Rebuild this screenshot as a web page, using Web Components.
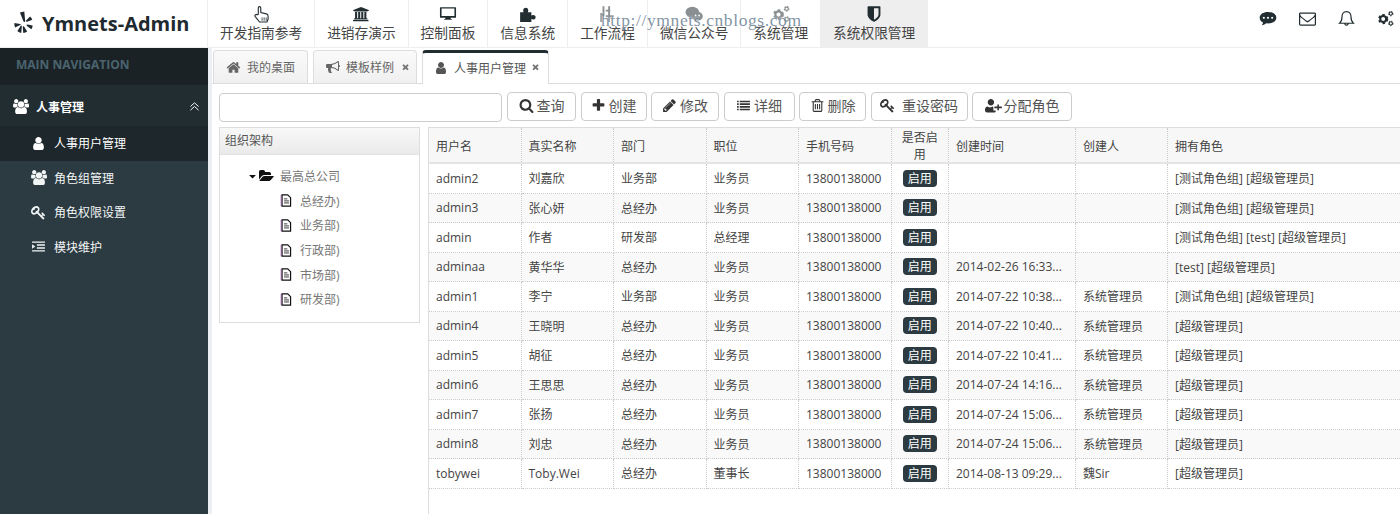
<!DOCTYPE html>
<html lang="zh">
<head>
<meta charset="utf-8">
<title>Ymnets-Admin</title>
<style>
  html, body { margin: 0; height: 100%; overflow: hidden; background: #fff; }
  body { font-family: "Open Sans", "Noto Sans CJK SC", sans-serif; font-size: 12px; color: #444; }
</style>
</head>
<body>
<ym-app></ym-app>
<script>
// Icon shapes, font-awesome style on a 1792 grid unless the entry gives its own box
const FA = 1792;
const ICONS = {
  search: 'M1216 832q0-185-131.5-316.5t-316.5-131.5-316.5 131.5-131.5 316.5 131.5 316.5 316.5 131.5 316.5-131.5 131.5-316.5zm512 832q0 52-38 90t-90 38q-54 0-90-38l-343-342q-179 124-399 124-143 0-273.5-55.5t-225-150-150-225-55.5-273.5 55.5-273.5 150-225 225-150 273.5-55.5 273.5 55.5 225 150 150 225 55.5 273.5q0 220-124 399l343 343q37 37 37 90z',
  user: 'M1536 1399q0 109-62.5 187t-150.5 78h-854q-88 0-150.5-78t-62.5-187q0-85 8.5-160.5t31.5-152 58.5-131 94-89 134.5-34.5q131 128 313 128t313-128q76 0 134.5 34.5t94 89 58.5 131 31.5 152 8.5 160.5zm-256-887q0 159-112.5 271.5t-271.5 112.5-271.5-112.5-112.5-271.5 112.5-271.5 271.5-112.5 271.5 112.5 112.5 271.5z',
  plus: 'M1600 736v192q0 40-28 68t-68 28h-416v416q0 40-28 68t-68 28h-192q-40 0-68-28t-28-68v-416h-416q-40 0-68-28t-28-68v-192q0-40 28-68t68-28h416v-416q0-40 28-68t68-28h192q40 0 68 28t28 68v416h416q40 0 68 28t28 68z',
  home: 'M1472 992v480q0 26-19 45t-45 19h-384v-384h-256v384h-384q-26 0-45-19t-19-45v-480q0-1 .5-3t.5-3l575-474 575 474q1 2 1 6zm223-69l-62 74q-8 9-21 11h-3q-13 0-21-7l-692-577-692 577q-12 8-24 7-13-2-21-11l-62-74q-8-10-7-23.5t11-21.5l719-599q32-26 76-26t76 26l244 204v-195q0-14 9-23t23-9h192q14 0 23 9t9 23v408l219 182q10 8 11 21.5t-7 23.5z',
  pencil: 'M491 1536l91-91-235-235-91 91v107h128v128h107zm523-928q0-22-22-22-10 0-17 7l-542 542q-7 7-7 17 0 22 22 22 10 0 17-7l542-542q7-7 7-17zm-54-192l416 416-832 832h-416v-416zm683 96q0 53-37 90l-166 166-416-416 166-165q36-38 90-38 53 0 91 38l235 234q37 39 37 91z',
  trash: 'M704 736v576q0 14-9 23t-23 9h-64q-14 0-23-9t-9-23v-576q0-14 9-23t23-9h64q14 0 23 9t9 23zm256 0v576q0 14-9 23t-23 9h-64q-14 0-23-9t-9-23v-576q0-14 9-23t23-9h64q14 0 23 9t9 23zm256 0v576q0 14-9 23t-23 9h-64q-14 0-23-9t-9-23v-576q0-14 9-23t23-9h64q14 0 23 9t9 23zm128 724v-948h-896v948q0 22 7 40.5t14.5 27 10.5 8.5h832q3 0 10.5-8.5t14.5-27 7-40.5zm-672-1076h448l-48-117q-7-9-17-11h-317q-10 2-17 11zm928 32v64q0 14-9 23t-23 9h-96v948q0 83-47 143.5t-113 60.5h-832q-66 0-113-58.5t-47-141.5v-952h-96q-14 0-23-9t-9-23v-64q0-14 9-23t23-9h309l70-167q15-37 54-63t79-26h320q40 0 79 26t54 63l70 167h309q14 0 23 9t9 23z',
  list: 'M128 320h192v192h-192zM448 320h1216v192h-1216zM128 640h192v192h-192zM448 640h1216v192h-1216zM128 960h192v192h-192zM448 960h1216v192h-1216zM128 1280h192v192h-192zM448 1280h1216v192h-1216z',
  key: 'M832 512q0-80-56-136t-136-56-136 56-56 136q0 42 19 83-41-19-83-19-80 0-136 56t-56 136 56 136 136 56 136-56 56-136q0-42-19-83 41 19 83 19 80 0 136-56t56-136zm851 704q0 17-49 66t-66 49q-9 0-28.5-16t-36.5-33-38.5-40-24.5-26l-96 96 220 220q28 28 28 68 0 42-39 81t-81 39q-40 0-68-28l-671-671q-176 131-365 131-163 0-265.5-102.5t-102.5-265.5q0-160 95-313t248-248 313-95q163 0 265.5 102.5t102.5 265.5q0 189-131 365l355 355 96-96q-3-3-26-24.5t-40-38.5-33-36.5-16-28.5q0-17 49-66t66-49q13 0 23 10 6 6 46 44.5t82 79.5 86.5 86 73 78 28.5 41z',
  envelope: 'M1664 1504v-768q-32 36-69 66-268 206-426 338-51 43-83 67t-86.5 48.5-102.5 24.5h-2q-48 0-102.5-24.5t-86.5-48.5-83-67q-158-132-426-338-37-30-69-66v768q0 13 9.5 22.5t22.5 9.5h1472q13 0 22.5-9.5t9.5-22.5zm0-1051v-24.5l-.5-13-3-12.5-5.5-9-9-7.5-14-2.5h-1472q-13 0-22.5 9.5t-9.5 22.5q0 168 147 284 193 152 401 317 6 5 35 29.5t46 37.5 44.5 31.5 50.5 27.5 43 9h2q20 0 43-9t50.5-27.5 44.5-31.5 46-37.5 35-29.5q208-165 401-317 54-43 100.5-115.5t46.5-131.5zm128-37v1088q0 66-47 113t-113 47h-1472q-66 0-113-47t-47-113v-1088q0-66 47-113t113-47h1472q66 0 113 47t47 113z',
  users: 'M593 896q-162 5-265 128h-134q-82 0-138-40.5t-56-118.5q0-353 124-353 6 0 43.5 21t97.5 42.5 119 21.5q67 0 133-23-5 37-5 66 0 139 81 256zm1071 637q0 120-73 189.5t-194 69.5h-874q-121 0-194-69.5t-73-189.5q0-53 3.5-103.5t14-109 26.5-108.5 43-97.5 62-81 85.5-53.5 111.5-20q10 0 43 21.5t73 48 107 48 135 21.5 135-21.5 107-48 73-48 43-21.5q61 0 111.5 20t85.5 53.5 62 81 43 97.5 26.5 108.5 14 109 3.5 103.5zm-1024-1277q0 106-75 181t-181 75-181-75-75-181 75-181 181-75 181 75 75 181zm704 384q0 159-112.5 271.5t-271.5 112.5-271.5-112.5-112.5-271.5 112.5-271.5 271.5-112.5 271.5 112.5 112.5 271.5zm576 225q0 78-56 118.5t-138 40.5h-134q-103-123-265-128 81-117 81-256 0-29-5-66 66 23 133 23 59 0 119-21.5t97.5-42.5 43.5-21q124 0 124 353zm-128-609q0 106-75 181t-181 75-181-75-75-181 75-181 181-75 181 75 75 181z',
  folder: 'M1879 952q0 31-31 66l-336 396q-43 51-120.5 86.5t-143.5 35.5h-1088q-34 0-60.5-13t-26.5-43q0-31 31-66l336-396q43-51 120.5-86.5t143.5-35.5h1088q34 0 60.5 13t26.5 43zm-343-344v160h-832q-94 0-197 47.5t-164 119.5l-337 396-5 6q0-4-.5-12.5t-.5-12.5v-960q0-92 66-158t158-66h320q92 0 158 66t66 158v32h544q92 0 158 66t66 158z',
  bullhorn: 'M1664 640q53 0 90.5 37.5t37.5 90.5-37.5 90.5-90.5 37.5v384q0 52-38 90t-90 38q-417-347-812-380-58 19-91 66t-31 100.5 40 92.5q-20 33-23 65.5t6 58 33.5 55 48 50 61.5 50.5q-29 58-111.5 83t-168.5 11.5-132-55.5q-7-23-29.5-87.5t-32-94.5-23-89-15-101 3.5-98.5 22-110.5h-122q-66 0-113-47t-47-113v-192q0-66 47-113t113-47h480q435 0 896-384 52 0 90 38t38 90v384zm-128 604v-954q-394 302-768 343v270q377 42 768 341z',
  bank: 'M896 192l768 307v102h-102q0 21-16 36t-39 15h-1222q-23 0-39-15t-16-36h-102v-102zM307 704h205v614h102v-614h205v614h102v-614h205v614h102v-614h205v614h47q22 0 39 15t16 36v51h-1331v-51q0-21 16-36t39-15h47v-614zM1587 1472q23 0 39 15t16 36v102h-1536v-102q0-21 16-36t39-15h1442z',
  desktop: 'M160 224h1472q64 0 64 64v928q0 64-64 64h-480q0 60 40 112h80v80h-752v-80h80q40-52 40-112h-480q-64 0-64-64v-928q0-64 64-64zM256 352v736h1280v-736z',
  shield: 'M1344 960v-640h-448v1137q119-63 213-137 235-184 235-360zm192-768v768q0 86-33.5 170.5t-83 150-118 127.5-126.5 103-121 77.5-89.5 49.5-42.5 20q-12 6-26 6t-26-6q-16-7-42.5-20t-89.5-49.5-121-77.5-126.5-103-118-127.5-83-150-33.5-170.5v-768q0-26 19-45t45-19h1152q26 0 45 19t19 45z',
  comment: 'M896 192c490 0 830 240 830 570s-340 570-830 570c-60 0-120-4-180-12-110 110-260 170-440 190 60-80 110-170 130-270-220-100-340-270-340-478 0-330 340-570 830-570zM480 660a105 105 0 1 0 .1 0zM896 660a105 105 0 1 0 .1 0zM1312 660a105 105 0 1 0 .1 0z',
  indent: 'M128 288h1536v160h-1536zM704 640h960v160h-960zM704 992h960v160h-960zM128 1344h1536v160h-1536zM128 640l384 256-384 256z',
  userplus: 'M704 896q-159 0-271.5-112.5t-112.5-271.5 112.5-271.5 271.5-112.5 271.5 112.5 112.5 271.5-112.5 271.5-271.5 112.5zm416 128h352v-256h192v256h352v192h-352v256h-192v-256h-352zm-224 0q-20 0-93 48-80 50-199 50t-199-50q-73-48-93-48-230 0-300 260-12 50-12 196 0 110 70 175t180 65h874q90 0 146-44v-180h-270v-350q-50-122-104-122z',
  caret: 'M1408 704q0 26-19 45l-448 448q-19 19-45 19t-45-19l-448-448q-19-19-19-45t19-45 45-19h896q26 0 45 19t19 45z',
  times: 'M1298 1214q0 40-28 68l-136 136q-28 28-68 28t-68-28l-294-294-294 294q-28 28-68 28t-68-28l-136-136q-28-28-28-68t28-68l294-294-294-294q-28-28-28-68t28-68l136-136q28-28 68-28t68 28l294 294 294-294q28-28 68-28t68 28l136 136q28 28 28 68t-28 68l-294 294 294 294q28 28 28 68z'
};
// Cog used for the small and large gears
const cog = (x, y, r, w) => `<circle cx="${x}" cy="${y}" r="${r}" fill="none" stroke="currentColor" stroke-width="${w}"/><circle cx="${x}" cy="${y}" r="${r + w * 0.6}" fill="none" stroke="currentColor" stroke-width="${w * 0.9}" stroke-dasharray="${r * 0.8} ${r * 0.75}"/>`;
// Drawn on a 16 box, mostly strokes
const DRAWN = {
  chevrons: '<path d="M3 8l5-4.500 5 4.500M3 12.500l5-4.500 5 4.500" fill="none" stroke="currentColor" stroke-width="1.200"/>',
  bell: '<path d="M8 1.500c-3 0-4.200 2.200-4.200 4.600 0 3.400-.8 5-2.300 6.400h13c-1.500-1.400-2.300-3-2.300-6.400 0-2.400-1.200-4.600-4.200-4.600z M6.400 12.800c0 2 3.200 2 3.200 0" fill="none" stroke="currentColor" stroke-width="1.100"/>',
  hand: '<path d="M5.600 8.200V2.600c0-1.500 2.200-1.500 2.200 0v4.100l5 1.200c1 .3 1.500 1 1.500 2v2.600l-1 2.600H6.700L2.900 10.300c-.9-1.200.6-2.500 1.700-1.500z" fill="none" stroke="currentColor" stroke-width="1"/><path d="M9 11v3M10.800 11v3M12.600 11v3" stroke="currentColor" stroke-width=".7"/>',
  file: '<path d="M2.500 1h7l3.500 3.500V15h-10.500z" fill="#fff" stroke="#111" stroke-width="1.500"/><path d="M5 6h4M5 8.500h6M5 11h6" stroke="#222" stroke-width="1.100"/><path d="M1.400 1v14" stroke="#8a4a9a" stroke-width=".9"/>',
  flow: '<path d="M4 1v9M2 7v8M9 1v14M6 10h7M6 5h4" stroke="currentColor" stroke-width="1.700" fill="none"/>',
  wechat: '<ellipse cx="6.500" cy="6.500" rx="6" ry="5"/><ellipse cx="11" cy="10" rx="4.800" ry="4"/><circle cx="9.400" cy="9.300" r=".8" fill="#fff"/><circle cx="12.500" cy="9.300" r=".8" fill="#fff"/>',
  puzzle: '<path d="M1 6.500h3.200c-.9-1.200-.6-4 1.800-4s2.700 2.800 1.800 4h3.200v2.800c1.100-.9 3.800-.7 3.800 1.500s-2.700 2.400-3.800 1.500v2.700h-10z"/>',
  gears: cog(5.800, 8.500, 2.800, 1.900) + cog(13, 3.400, 1.500, 1) + cog(13, 12.600, 1.500, 1),
  logo: '<g transform="translate(10.500 12)"><path d="M-3.600-11.600l4.400-1 .9 9.800c0 1-1.200 1.200-1.700.4z"/><path d="M2.800-3.700l3.800-3.900c1 .9 1.800 2 2.200 3.300l-5.100 2.100c-.9.300-1.500-.8-.9-1.500z"/><path d="M3.900.4l5.200 1c0 1.400-.5 2.800-1.300 3.900l-4.300-3.400c-.7-.6-.4-1.700.4-1.500z"/><path d="M.7 2.700l3 4.900c-1.100.9-2.500 1.400-3.900 1.500l-.6-6c0-.9 1-1.100 1.500-.4z"/><path d="M-1.700 2.500l-.5 6.300c-1.500-.2-2.800-.9-3.900-1.900l3.200-5c.5-.8 1.300-.2 1.200.6z"/><path d="M-2.900.7l-5.500 2.700c-.7-1.400-.9-2.800-.7-4.300l5.700 1c.9.200 1.100.3.500.6z"/></g>'
};

class YmIcon extends HTMLElement {
  connectedCallback() {
    const name = this.getAttribute('name');
    const size = this.getAttribute('size') || 14;
    const body = DRAWN[name]
      ? { box: name === 'logo' ? '0 0 24 24' : '0 0 16 16', inner: DRAWN[name] }
      : { box: `0 0 ${FA} ${FA}`, inner: `<path d="${ICONS[name]}"/>` };
    this.attachShadow({ mode: 'open' }).innerHTML = `
      <style>
        :host { display: inline-flex; flex: none; width: ${size}px; height: ${size}px; }
        svg { width: 100%; height: 100%; fill: currentColor; overflow: visible; }
      </style>
      <svg viewBox="${body.box}">${body.inner}</svg>`;
  }
}
customElements.define('ym-icon', YmIcon);

class YmHeader extends HTMLElement {
  constructor() {
    super();
    const nav = [
      ['hand', '开发指南参考'], ['bank', '进销存演示'], ['desktop', '控制面板'], ['puzzle', '信息系统'],
      ['flow', '工作流程'], ['wechat', '微信公众号'], ['gears', '系统管理'], ['shield', '系统权限管理']
    ];
    const items = nav.map(([icon, text], i) => `
      <a class="${i === 7 ? 'active' : ''} ${i > 3 && i < 7 ? 'dim' : ''}"><ym-icon name="${icon}" size="18"></ym-icon><span>${text}</span></a>`).join('');
    this.attachShadow({ mode: 'open' }).innerHTML = `
      <style>
        :host { display: flex; height: 47px; background: #fff; border-bottom: 1px solid #eee; box-sizing: content-box; color: #222d32; position: relative; }
        .brand { width: 207px; flex: none; display: flex; align-items: center; gap: 5px; padding-left: 13px; box-sizing: border-box; font: bold 20px "Open Sans", sans-serif; color: #1f2a30; }
        nav { display: flex; flex: 1; }
        a { display: flex; flex-direction: column; align-items: center; padding: 5px 12px 0; border-left: 1px solid #eee; font-size: 13.700px; line-height: 19px; color: #444; }
        a ym-icon { color: #222d32; }
        a.dim ym-icon { color: #8a8f92; }
        a.active { background: #eee; padding-right: 13px; }
        .tools { display: flex; align-items: center; gap: 22px; padding: 0 6px 10px 0; }
        .mark { position: absolute; left: 601px; top: 11px; line-height: 18px; font-family: "Liberation Serif", serif; font-size: 17.500px; letter-spacing: .6px; color: rgba(95,120,140,.8); text-shadow: 0 0 3px rgba(255,255,255,.9); }
      </style>
      <div class="brand"><ym-icon name="logo" size="24"></ym-icon><span>Ymnets-Admin</span></div>
      <nav>${items}</nav>
      <div class="tools">
        <ym-icon name="comment" size="18"></ym-icon>
        <ym-icon name="envelope" size="17"></ym-icon>
        <ym-icon name="bell" size="17"></ym-icon>
        <ym-icon name="gears" size="17"></ym-icon>
      </div>
      <div class="mark">http://ymnets.cnblogs.com</div>`;
  }
}
customElements.define('ym-header', YmHeader);

class YmSidebar extends HTMLElement {
  constructor() {
    super();
    const subs = [['user', '人事用户管理', true], ['users', '角色组管理'], ['key', '角色权限设置'], ['indent', '模块维护']];
    this.attachShadow({ mode: 'open' }).innerHTML = `
      <style>
        :host { display: block; background: #2c3b41; color: #fff; font-size: 12px; }
        .title { height: 37px; line-height: 33px; padding-left: 16px; background: #1a2226; color: #4b646f; font-weight: bold; }
        .group { height: 41px; box-sizing: border-box; display: flex; align-items: center; gap: 8px; padding: 2px 7px 0 13px; background: #222d32; font-weight: bold; }
        .group span { flex: 1; }
        .item { height: 34.500px; display: flex; align-items: center; gap: 8px; padding-left: 31px; color: #f2f5f6; }
        .item.active { background: #1e282c; color: #fff; }
      </style>
      <div class="title">MAIN NAVIGATION</div>
      <div class="group"><ym-icon name="users" size="15"></ym-icon><span>人事管理</span><ym-icon name="chevrons" size="13"></ym-icon></div>
      ${subs.map(([i, t, a]) => `<div class="item ${a ? 'active' : ''}"><ym-icon name="${i}" size="15"></ym-icon><span>${t}</span></div>`).join('')}`;
  }
}
customElements.define('ym-sidebar', YmSidebar);

class YmTabs extends HTMLElement {
  constructor() {
    super();
    this.attachShadow({ mode: 'open' }).innerHTML = `
      <style>
        :host { display: flex; height: 36px; box-sizing: border-box; padding: 2px 0 0 1px; gap: 5px; border-bottom: 1px solid #ddd; color: #666; font-size: 12px; white-space: nowrap; }
        .tab { display: flex; align-items: center; box-sizing: border-box; height: 33px; padding: 0 7px 0 12px; border: 1px solid #ddd; border-bottom: 0; border-radius: 4px 4px 0 0; background: linear-gradient(#fafafa, #f0f0f0); gap: 6px; }
        .tab.on { background: #fff; border-top: 3px solid #222d32; height: 34px; color: #555; z-index: 1; padding: 0 7px 2px 11px; }
        .x { color: #777; margin-left: 2px; }
        .on .x { margin-left: 0; }
      </style>
      <div class="tab" style="width:95px"><ym-icon name="home" size="15"></ym-icon><span>我的桌面</span></div>
      <div class="tab" style="width:104px"><ym-icon name="bullhorn" size="14"></ym-icon><span>模板样例</span><ym-icon class="x" name="times" size="9"></ym-icon></div>
      <div class="tab on" style="width:127px"><ym-icon name="user" size="14"></ym-icon><span>人事用户管理</span><ym-icon class="x" name="times" size="9"></ym-icon></div>`;
  }
}
customElements.define('ym-tabs', YmTabs);

class YmButton extends HTMLElement {
  constructor() {
    super();
    this.attachShadow({ mode: 'open' }).innerHTML = `
      <style>
        :host { display: inline-flex; align-items: center; justify-content: center; gap: 3px; height: 29px; box-sizing: border-box; padding-bottom: 3px; border: 1px solid #ccc; border-radius: 4px; background: #fff; color: #555; font-size: 14px; white-space: nowrap; }
        ::slotted(ym-icon) { color: #333; }
      </style>
      <slot></slot>`;
  }
}
customElements.define('ym-button', YmButton);

class YmToolbar extends HTMLElement {
  constructor() {
    super();
    const btns = [['search', '查询', 69, 3], ['plus', '创建', 66, 3], ['pencil', '修改', 68, 3], ['list', '详细', 71, 3], ['trash', '删除', 67, 3], ['key', '重设密码', 97, 7], ['userplus', '分配角色', 100, 4]];
    this.attachShadow({ mode: 'open' }).innerHTML = `
      <style>
        :host { display: flex; gap: 5px; align-items: flex-start; height: 29px; }
        .input { width: 283px; height: 29px; box-sizing: border-box; border: 1px solid #ccc; border-radius: 4px; margin-top: 1px; }
        .btns { display: flex; gap: 4.500px; }
      </style>
      <div class="input"></div>
      <div class="btns">${btns.map(([i, t, w, g]) => `<ym-button style="width:${w}px;gap:${g}px"><ym-icon name="${i}" size="15"></ym-icon>${t}</ym-button>`).join('')}</div>`;
  }
}
customElements.define('ym-toolbar', YmToolbar);

class YmTree extends HTMLElement {
  constructor() {
    super();
    const kids = ['总经办)', '业务部)', '行政部)', '市场部)', '研发部)'];
    this.attachShadow({ mode: 'open' }).innerHTML = `
      <style>
        :host { display: block; width: 201px; height: 196px; flex: none; box-sizing: border-box; border: 1px solid #ddd; color: #666; font-size: 12px; }
        .head { height: 26px; line-height: 26px; padding-left: 5px; background: linear-gradient(#f8f8f8, #eaeaea); border-bottom: 1px solid #e2e2e2; color: #555; }
        ul { list-style: none; margin: 0; padding: 9px 0 0 27px; }
        li { display: flex; align-items: center; height: 24.600px; gap: 1px; color: #111; }
        li span { color: #777; margin-left: 6px; }
        ul ul { padding: 0 0 0 33px; }
        ul ul li { gap: 2px; }
        ul ul span { margin-left: 5px; }
      </style>
      <div class="head">组织架构</div>
      <ul>
        <li><ym-icon name="caret" size="11"></ym-icon><ym-icon name="folder" size="14"></ym-icon><span>最高总公司</span></li>
        <ul>${kids.map(k => `<li><ym-icon name="file" size="13"></ym-icon><span>${k}</span></li>`).join('')}</ul>
      </ul>`;
  }
}
customElements.define('ym-tree', YmTree);

class YmTable extends HTMLElement {
  constructor() {
    super();
    const A = '[测试角色组] [超级管理员]', B = '[超级管理员]', S = '系统管理员';
    const rows = [
      ['admin2', '刘嘉欣', '业务部', '业务员', '', '', A],
      ['admin3', '张心妍', '总经办', '业务员', '', '', A],
      ['admin', '作者', '研发部', '总经理', '', '', '[测试角色组] [test] [超级管理员]'],
      ['adminaa', '黄华华', '总经办', '业务员', '2014-02-26 16:33...', '', '[test] [超级管理员]'],
      ['admin1', '李宁', '业务部', '业务员', '2014-07-22 10:38...', S, A],
      ['admin4', '王晓明', '总经办', '业务员', '2014-07-22 10:40...', S, B],
      ['admin5', '胡征', '总经办', '业务员', '2014-07-22 10:41...', S, B],
      ['admin6', '王思思', '总经办', '业务员', '2014-07-24 14:16...', S, B],
      ['admin7', '张扬', '总经办', '业务员', '2014-07-24 15:06...', S, B],
      ['admin8', '刘忠', '总经办', '业务员', '2014-07-24 15:06...', S, B],
      ['tobywei', 'Toby.Wei', '总经办', '董事长', '2014-08-13 09:29...', '魏Sir', B]
    ];
    const heads = ['用户名', '真实名称', '部门', '职位', '手机号码', '是否启用', '创建时间', '创建人', '拥有角色'];
    const head = heads.map((h, i) => `<div class="c h ${i === 5 ? 'mid' : ''}"><span>${h}</span></div>`).join('');
    const body = rows.map((r, n) => {
      const cls = n % 2 ? 'c alt' : 'c';
      return `<div class="${cls}">${r[0]}</div><div class="${cls}">${r[1]}</div><div class="${cls}">${r[2]}</div><div class="${cls}">${r[3]}</div>
        <div class="${cls}">13800138000</div><div class="${cls} mid"><b>启用</b></div><div class="${cls}">${r[4]}</div><div class="${cls}">${r[5]}</div><div class="${cls}">${r[6]}</div>`;
    }).join('');
    this.attachShadow({ mode: 'open' }).innerHTML = `
      <style>
        :host { display: block; flex: 1; border: 1px solid #ddd; border-width: 1px 0 0 1px; font-size: 12px; color: #444; min-width: 0; }
        .grid { display: grid; grid-template-columns: 92.500px 92.500px 92.500px 92.500px 92.500px 57.500px 127px 92px 1fr; grid-template-rows: 36px repeat(11, 29.500px); }
        .c { display: flex; align-items: center; padding-left: 7px; box-sizing: border-box; border-right: 1px dotted #ccc; border-bottom: 1px dotted #ccc; white-space: nowrap; min-width: 0; overflow: hidden; }
        .c:nth-child(9n) { border-right: 0; }
        .h { background: #f7f7f7; border-bottom: 2px solid #e4e4e4; color: #444; white-space: normal; line-height: 17px; padding-top: 2px; }
        .alt { background: #f9f9f9; }
        .mid { justify-content: center; text-align: center; padding: 0 6px; }
        .h.mid { padding-top: 2px; }
        b { display: block; flex: none; background: #2c3b41; color: #fff; font-weight: normal; font-size: 12px; line-height: 17px; padding: 0 5px; border-radius: 4px; }
      </style>
      <div class="grid">${head}${body}</div>`;
  }
}
customElements.define('ym-table', YmTable);

class YmApp extends HTMLElement {
  constructor() {
    super();
    this.attachShadow({ mode: 'open' }).innerHTML = `
      <style>
        :host { display: grid; grid-template-columns: 208px 1fr; grid-template-rows: auto 1fr; height: 514px; overflow: hidden; }
        ym-header { grid-column: 1 / 3; }
        main { display: flex; flex-direction: column; border-left: 4px solid #ecf0f5; min-width: 0; }
        .pane { display: flex; flex-direction: column; gap: 6px; padding: 8px 0 0 7px; flex: 1; min-height: 0; }
        .split { display: flex; gap: 8px; align-items: flex-start; flex: 1; min-height: 0; }
        ym-table { align-self: stretch; }
      </style>
      <ym-header></ym-header>
      <ym-sidebar></ym-sidebar>
      <main>
        <ym-tabs></ym-tabs>
        <div class="pane">
          <ym-toolbar></ym-toolbar>
          <div class="split"><ym-tree></ym-tree><ym-table></ym-table></div>
        </div>
      </main>`;
  }
}
customElements.define('ym-app', YmApp);
</script>
</body>
</html>
